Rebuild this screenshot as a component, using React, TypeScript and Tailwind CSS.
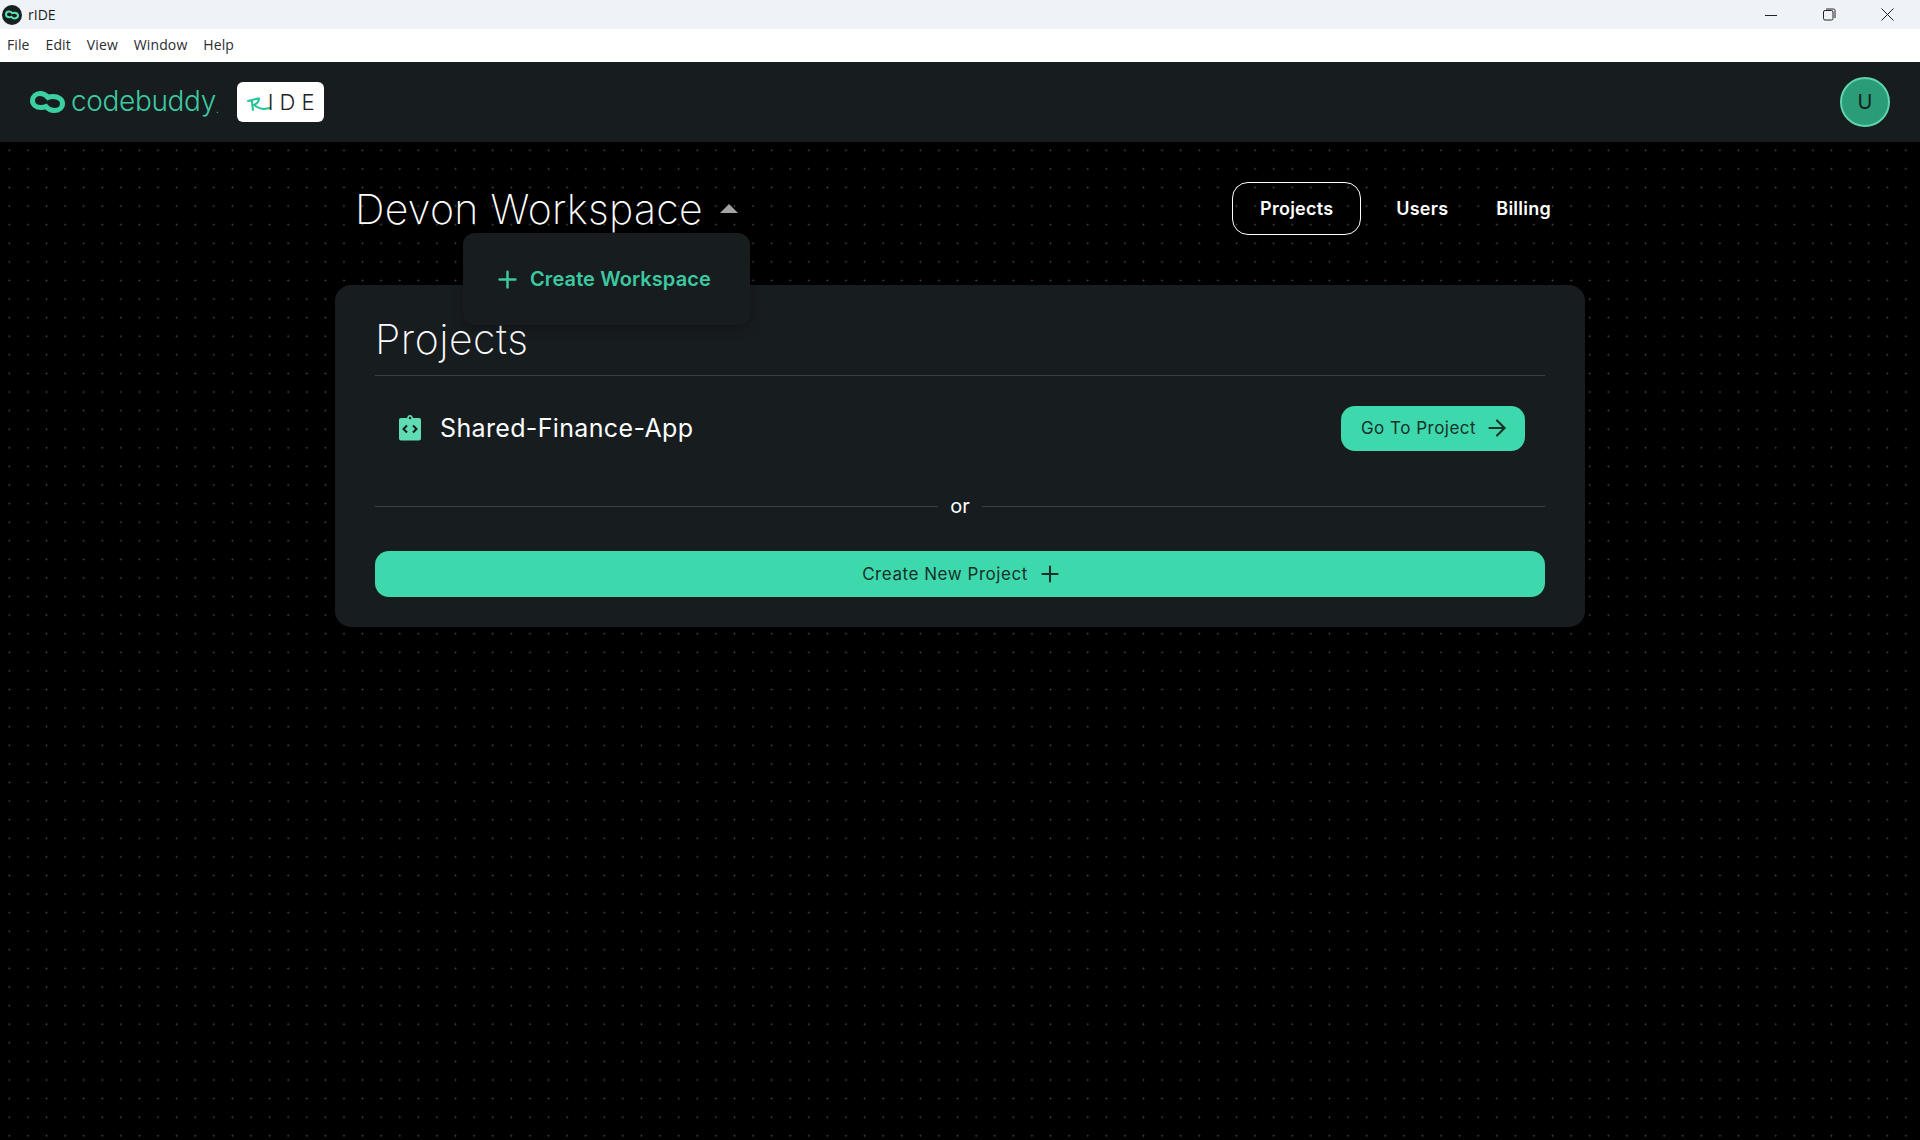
import { ArrowRight, Plus } from 'lucide-react'

const heading = { fontFamily: '"Inter", "Liberation Sans", sans-serif' }

function CloudMark({ className, color }: { className: string; color: string }) {
    return (
        <svg viewBox="0 0 35 22" fill="none" className={className}>
            <path
                d="M10 2.500 C13.500 2.500 16 4 18 6.500 C19.500 5.800 21 5.500 23 5.500 C28.500 5.500 32.500 8.500 32.500 12.500 C32.500 16.500 29 19.500 24 19.500 C20.500 19.500 18 18 16 15.500 C14.500 16.200 13 16.500 11 16.500 C6 16.500 2.500 13.500 2.500 9.500 C2.500 5.500 6 2.500 10 2.500 Z"
                stroke={color}
                strokeWidth="5"
            />
        </svg>
    )
}

function WindowBar() {
    return (
        <div className="flex h-[29px] items-center justify-between bg-[#eff3f8] pl-[2px]">
            <div className="flex items-center gap-[6px]">
                <div className="flex h-[20px] w-[20px] items-center justify-center rounded-full bg-[#15201f]">
                    <CloudMark className="h-[10px] w-[14px]" color="#5fe0b8" />
                </div>
                <span className="text-[14px] text-[#1a1a1a]" style={{ fontFamily: '"Open Sans", sans-serif' }}>rIDE</span>
            </div>
            <div className="flex items-center">
                <button className="flex h-[29px] w-[58px] items-center justify-center">
                    <svg width="12" height="12" viewBox="0 0 12 12"><path d="M0 6.500H12" stroke="#222" strokeWidth="1" /></svg>
                </button>
                <button className="flex h-[29px] w-[58px] items-center justify-center">
                    <svg width="13" height="13" viewBox="0 0 13 13" fill="none">
                        <rect x="0.500" y="2.500" width="9.500" height="9.500" rx="1.500" stroke="#222" />
                        <path d="M3 1H10.500C11.500 1 12 1.500 12 2.500V10" stroke="#222" />
                    </svg>
                </button>
                <button className="mr-[4px] flex h-[29px] w-[58px] items-center justify-center">
                    <svg width="13" height="13" viewBox="0 0 13 13"><path d="M0.500 0.500L12.500 12.500M12.500 0.500L0.500 12.500" stroke="#222" /></svg>
                </button>
            </div>
        </div>
    )
}

function MenuBar() {
    return (
        <div className="flex h-[33px] items-center gap-[16px] bg-white pb-[2px] pl-[7px] text-[14px] tracking-[0.1px] text-[#2b2b33]" style={{ fontFamily: '"Open Sans", sans-serif' }}>
            {['File', 'Edit', 'View', 'Window', 'Help'].map((m) => (
                <span key={m}>{m}</span>
            ))}
        </div>
    )
}

function AppHeader() {
    return (
        <header className="flex h-[80px] items-center justify-between bg-[#171c1f] pl-[30px] pr-[30px]">
            <div className="flex items-center">
                <CloudMark className="h-[22px] w-[35px]" color="#3dcfa4" />
                <span className="ml-[6px] pb-[2px] text-[28px] font-light tracking-[-0.35px] text-[#3dc9a0]">codebuddy</span>
                <span className="mt-[14px] text-[10px] text-[#3dc9a0]">.</span>
                <div className="ml-[18px] flex h-[40px] w-[87px] items-center rounded-[6px] bg-white pl-[10px]">
                    <svg width="24" height="14" viewBox="0 0 24 14" fill="none" className="mt-[3px] shrink-0">
                        <path d="M1 4L11 1.500M5 4C5 7 5.500 10 6 13M12 1.500C12 5 9 7 7 8C10 10 13 12 17 12L23 11" stroke="#22c497" strokeWidth="2" strokeLinecap="round" />
                    </svg>
                    <span className="-ml-[3px] text-[22px] font-light tracking-[6px] text-[#222]">IDE</span>
                </div>
            </div>
            <div className="flex h-[50px] w-[50px] items-center justify-center rounded-full border-2 border-[#5fd3ac] bg-[#2a9d78] text-[20px] text-[#10201b]">U</div>
        </header>
    )
}

function Divider({ className = '' }: { className?: string }) {
    return <div className={`h-px bg-[#3a3f42] ${className}`} />
}

function WorkspaceMenu() {
    return (
        <div className="absolute left-[128px] top-[91px] z-10 flex h-[92px] w-[287px] items-center rounded-[12px] bg-[#171c1f] pl-[31px] shadow-[0_4px_12px_rgba(0,0,0,0.25)]">
            <Plus className="h-[27px] w-[27px] text-[#3dc9a0]" strokeWidth={2.2} />
            <span className="ml-[9px] text-[20px] font-semibold tracking-[0.1px] text-[#3dc9a0]">Create Workspace</span>
        </div>
    )
}

export default function App() {
    return (
        <div className="flex min-h-[1140px] flex-col bg-black" style={heading}>
            <WindowBar />
            <MenuBar />
            <AppHeader />

            <main className="flex-1 bg-[radial-gradient(circle,#484848_0.8px,transparent_1.1px)] bg-[size:18.6px_18.6px] bg-[position:0_-1px]">
                <div className="mx-auto w-[1250px]">
                    {/* Titre workspace + onglets */}
                    <div className="relative flex h-[143px] items-start justify-between pl-[20px] pr-[34px]">
                        <div className="flex items-center pt-[39px]">
                            <h1 className="text-[41px] font-[150] leading-[56px] tracking-[0.35px] text-white">Devon Workspace</h1>
                            <svg width="18" height="9" viewBox="0 0 18 9" className="mb-[2px] ml-[17px]"><path d="M9 0L18 9H0Z" fill="#a3a3a3" /></svg>
                        </div>
                        <WorkspaceMenu />
                        <nav className="flex items-center pt-[40px] text-[18px] font-semibold tracking-[0.25px] text-white">
                            <a className="flex h-[53px] w-[129px] items-center justify-center rounded-[16px] border border-white pb-[1px]">Projects</a>
                            <a className="mb-[1px] ml-[35px]">Users</a>
                            <a className="mb-[1px] ml-[48px]">Billing</a>
                        </nav>
                    </div>

                    {/* Carte projets */}
                    <section className="flex h-[342px] flex-col rounded-[16px] bg-[#171c1f] px-[40px] pt-[26px]">
                        <h2 className="text-[41px] font-[150] leading-[56px] tracking-[0.5px] text-white">Projects</h2>
                        <Divider className="mt-[8px]" />
                        <div className="mb-[14px] flex h-[104px] items-center justify-between pl-[24px] pr-[20px]">
                            <div className="flex items-center gap-[19px]">
                                <svg width="22" height="26" viewBox="0 0 22 26">
                                    <path d="M2 3H8C8.500 1 9.500 0 11 0C12.500 0 13.500 1 14 3H20C21.200 3 22 3.800 22 5V23.500C22 24.700 21.200 25.500 20 25.500H2C0.800 25.500 0 24.700 0 23.500V5C0 3.800 0.800 3 2 3Z" fill="#5fdcb4" />
                                    <circle cx="11" cy="3" r="1.200" fill="#171c1f" />
                                    <path d="M8 10.500L4.500 14L8 17.500M14 10.500L17.500 14L14 17.500" stroke="#171c1f" strokeWidth="2" fill="none" />
                                </svg>
                                <span className="pt-[2px] text-[25px] tracking-[0.35px] text-white">Shared-Finance-App</span>
                            </div>
                            <button className="flex h-[45px] w-[184px] items-center justify-center gap-[8px] rounded-[14px] bg-[#3dd9ac] pl-[5px] text-[17px] tracking-[0.5px] text-[#17302a]">
                                <span className="pt-[1px]">Go To Project</span>
                                <ArrowRight className="h-[26px] w-[26px]" strokeWidth={1.9} />
                            </button>
                        </div>
                        <div className="flex items-center">
                            <Divider className="flex-1" />
                            <span className="w-[44px] text-center text-[20px] leading-[24px] text-white">or</span>
                            <Divider className="flex-1" />
                        </div>
                        <button className="mt-[33px] flex h-[46px] items-center justify-center gap-[9px] rounded-[14px] bg-[#3dd9ac] pl-[5px] text-[17px] tracking-[0.55px] text-[#17302a]">
                            <span className="pt-[1px]">Create New Project</span>
                            <Plus className="h-[26px] w-[26px]" strokeWidth={1.9} />
                        </button>
                    </section>
                </div>
            </main>
        </div>
    )
}
